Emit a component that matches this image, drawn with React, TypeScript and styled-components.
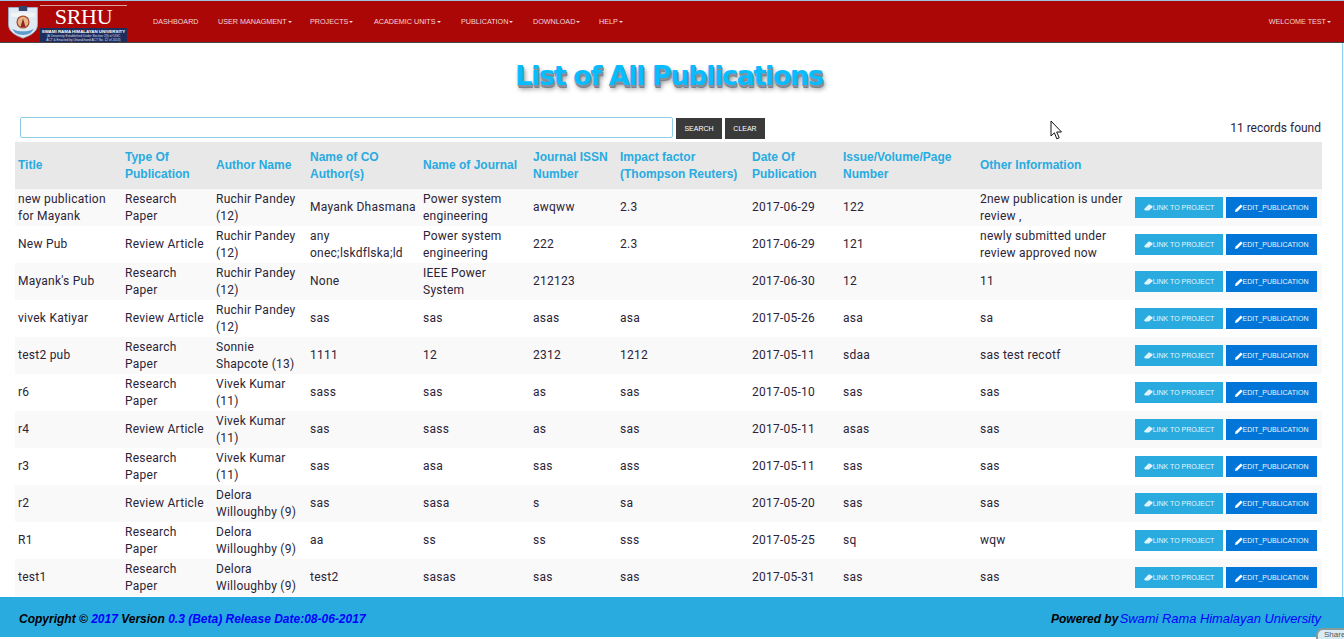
import { createGlobalStyle, styled } from 'styled-components'

const rows = [
  ['new publication for Mayank', 'Research Paper', 'Ruchir Pandey (12)', 'Mayank Dhasmana', 'Power system engineering', 'awqww', '2.3', '2017-06-29', '122', '2new publication is under review ,'],
  ['New Pub', 'Review Article', 'Ruchir Pandey (12)', 'any onec;lskdflska;ld', 'Power system engineering', '222', '2.3', '2017-06-29', '121', 'newly submitted under review approved now'],
  ["Mayank's Pub", 'Research Paper', 'Ruchir Pandey (12)', 'None', 'IEEE Power System', '212123', '', '2017-06-30', '12', '11'],
  ['vivek Katiyar', 'Review Article', 'Ruchir Pandey (12)', 'sas', 'sas', 'asas', 'asa', '2017-05-26', 'asa', 'sa'],
  ['test2 pub', 'Research Paper', 'Sonnie Shapcote (13)', '1111', '12', '2312', '1212', '2017-05-11', 'sdaa', 'sas test recotf'],
  ['r6', 'Research Paper', 'Vivek Kumar (11)', 'sass', 'sas', 'as', 'sas', '2017-05-10', 'sas', 'sas'],
  ['r4', 'Review Article', 'Vivek Kumar (11)', 'sas', 'sass', 'as', 'sas', '2017-05-11', 'asas', 'sas'],
  ['r3', 'Research Paper', 'Vivek Kumar (11)', 'sas', 'asa', 'sas', 'ass', '2017-05-11', 'sas', 'sas'],
  ['r2', 'Review Article', 'Delora Willoughby (9)', 'sas', 'sasa', 's', 'sa', '2017-05-20', 'sas', 'sas'],
  ['R1', 'Research Paper', 'Delora Willoughby (9)', 'aa', 'ss', 'ss', 'sss', '2017-05-25', 'sq', 'wqw'],
  ['test1', 'Research Paper', 'Delora Willoughby (9)', 'test2', 'sasas', 'sas', 'sas', '2017-05-31', 'sas', 'sas'],
]

const headers = [
  'Title',
  'Type Of Publication',
  'Author Name',
  'Name of CO Author(s)',
  'Name of Journal',
  'Journal ISSN Number',
  'Impact factor (Thompson Reuters)',
  'Date Of Publication',
  'Issue/Volume/Page Number',
  'Other Information',
  '',
]

const columnWidths = [107, 91, 94, 113, 110, 87, 132, 91, 137, 155, 190]

const navItems = [
  { label: 'DASHBOARD', width: 65 },
  { label: 'USER MANAGMENT', caret: true, width: 92 },
  { label: 'PROJECTS', caret: true, width: 64 },
  { label: 'ACADEMIC UNITS', caret: true, width: 87 },
  { label: 'PUBLICATION', caret: true, width: 72 },
  { label: 'DOWNLOAD', caret: true, width: 66 },
  { label: 'HELP', caret: true, width: 40 },
]

const App = () => {
  return (
    <>
      <GlobalStyle />
      <Page>
        <NavBar>
          <Logo>
            <Crest viewBox="0 0 40 40">
              <path d="M3 3h34v20c0 9-9 13-17 16C12 36 3 32 3 23z" fill="#dfeaf4" stroke="#9db6cf" strokeWidth="1" />
              <rect x="15" y="1" width="10" height="6" fill="#2f4468" />
              <path d="M6 9h28v5H6z" fill="#f3f4f4" />
              <circle cx="20" cy="20" r="7" fill="#e9b48a" stroke="#a8502f" strokeWidth="1.5" />
              <path d="M17 26l3-10 3 10z" fill="#8c2a20" />
              <path d="M7 28c6 4 20 4 26 0l-4 5c-5 3-13 3-18 0z" fill="#5f9ccb" />
            </Crest>
            <Brand>
              <BrandRule />
              <BrandName>SRHU</BrandName>
              <BrandPlate>
                <PlateTitle>SWAMI RAMA HIMALAYAN UNIVERSITY</PlateTitle>
                <PlateLine>(A University Established Under Section 2(f) of UGC</PlateLine>
                <PlateLine>ACT &amp; Enacted by Uttarakhand ACT No. 12 of 2013)</PlateLine>
              </BrandPlate>
            </Brand>
          </Logo>
          <NavList>
            {navItems.map((item) => (
              <NavItem key={item.label} $width={item.width}>
                {item.label}
                {item.caret && <Caret />}
              </NavItem>
            ))}
          </NavList>
          <Welcome>
            WELCOME TEST
            <Caret />
          </Welcome>
        </NavBar>

        <Main>
          <Heading>List of All Publications</Heading>

          <SearchRow>
            <SearchInput />
            <DarkButton $width={46}>SEARCH</DarkButton>
            <DarkButton $width={40}>CLEAR</DarkButton>
            <Records>11 records found</Records>
          </SearchRow>

          <Table>
            <colgroup>
              {columnWidths.map((w, i) => (
                <col key={i} width={w} />
              ))}
            </colgroup>
            <thead>
              <tr>
                {headers.map((h, i) => (
                  <Th key={i}>{h}</Th>
                ))}
              </tr>
            </thead>
            <tbody>
              {rows.map((row, i) => (
                <Tr key={i}>
                  {row.map((cell, j) => (
                    <Td key={j}>{cell}</Td>
                  ))}
                  <ActionCell>
                    <Actions>
                      <ActionButton $color="#29abe0" $width={88}>
                        <svg width="9" height="7" viewBox="0 0 9 7">
                          <path d="M0 5.2 4.6.6c.3-.3.7-.3 1 0l2.9 1.7c.3.3.3.6 0 .9L5 6.5H1.2z" fill="#dff3fb" />
                        </svg>
                        LINK TO PROJECT
                      </ActionButton>
                      <ActionButton $color="#0275d8" $width={91}>
                        <svg width="8" height="8" viewBox="0 0 8 8">
                          <path d="M0 8l.6-2.4L5.8.4l1.8 1.8L2.4 7.4z" fill="#fff" />
                        </svg>
                        EDIT_PUBLICATION
                      </ActionButton>
                    </Actions>
                  </ActionCell>
                </Tr>
              ))}
            </tbody>
          </Table>
        </Main>

        <Footer>
          <FooterText>
            Copyright © <FooterLink>2017</FooterLink> Version <FooterLink>0.3 (Beta) Release Date:08-06-2017</FooterLink>
          </FooterText>
          <FooterText>
            Powered by <UniversityLink>Swami Rama Himalayan University</UniversityLink>
          </FooterText>
        </Footer>

        <Cursor width="13" height="20" viewBox="0 0 13 20">
          <path d="M1 1v15l3.4-3.2 2.4 6 2.4-1-2.5-5.8H11.5z" fill="#fff" stroke="#111" strokeWidth="1" />
        </Cursor>
        <ShareTab>Share</ShareTab>
      </Page>
    </>
  )
}

export default App

const GlobalStyle = createGlobalStyle`
  html, body {
    margin: 0;
    padding: 0;
    background: #fff;
    overflow: hidden;
  }
  body {
    font-family: "Liberation Sans", Arial, sans-serif;
    font-size: 12px;
    color: #2b2438;
  }
`

const Page = styled.div`
  position: relative;
  width: 1344px;
  height: 639px;
  box-sizing: border-box;
  border-top: 1px solid #9cc4e0;
  overflow: hidden;
`

const NavBar = styled.div`
  display: flex;
  align-items: center;
  height: 42px;
  box-sizing: border-box;
  background: #ab0707;
  border-bottom: 1px solid #444;
`

const Logo = styled.div`
  display: flex;
  align-items: center;
  width: 143px;
  padding-left: 6px;
  box-sizing: border-box;
`

const Crest = styled.svg`
  width: 34px;
  height: 38px;
  flex: none;
`

const Brand = styled.div`
  display: flex;
  flex-direction: column;
  width: 87px;
  height: 40px;
`

const BrandRule = styled.div`
  height: 1px;
  margin-top: 3px;
  background: #d8a0a0;
`

const BrandName = styled.div`
  height: 22px;
  font-family: "Liberation Serif", serif;
  font-size: 22px;
  line-height: 22px;
  letter-spacing: -0.3px;
  color: #fff;
  text-align: center;
`

const BrandPlate = styled.div`
  flex: 1;
  padding-top: 1px;
  background: #1e2d5c;
  text-align: center;
  overflow: hidden;
`

const PlateTitle = styled.div`
  font-size: 4.4px;
  line-height: 5px;
  font-weight: bold;
  color: #fff;
  white-space: nowrap;
`

const PlateLine = styled.div`
  font-size: 3.2px;
  line-height: 4px;
  color: #dde;
  white-space: nowrap;
`

const NavList = styled.div`
  display: flex;
  align-items: center;
  margin-left: 10px;
`

const NavItem = styled.div<{ $width: number }>`
  width: ${(p) => p.$width}px;
  font-size: 7.2px;
  color: #f2d6dc;
  white-space: nowrap;
`

const Welcome = styled.div`
  margin-left: auto;
  margin-right: 13px;
  font-size: 7.2px;
  color: #f2d6dc;
  white-space: nowrap;
`

const Caret = styled.span`
  display: inline-block;
  margin-left: 1px;
  vertical-align: middle;
  border-top: 2px solid #f2d6dc;
  border-left: 2px solid transparent;
  border-right: 2px solid transparent;
`

const Main = styled.div`
  width: 1343px;
  height: 554px;
  box-sizing: border-box;
  border-right: 1px solid #8fd0f2;
`

const Heading = styled.h1`
  margin: 0;
  padding: 14px 4px 0 0;
  height: 72px;
  box-sizing: border-box;
  font-family: "DejaVu Sans", Verdana, sans-serif;
  font-size: 27px;
  line-height: 38px;
  font-weight: bold;
  letter-spacing: -1.38px;
  text-align: center;
  color: #08bcff;
  text-shadow: 0 1px 0 #8a8f99, 1px 2px 0 #8a8f99, 1px 3px 0 #7c818b, 2px 4px 5px rgba(0, 0, 0, 0.45);
`

const SearchRow = styled.div`
  display: flex;
  align-items: center;
  gap: 3px;
  height: 24px;
  padding: 0 21px 0 20px;
`

const SearchInput = styled.input`
  width: 653px;
  height: 21px;
  box-sizing: border-box;
  border: 1px solid #8ccde8;
  border-radius: 2px;
  background: #fff;
  outline: none;
`

const DarkButton = styled.div<{ $width: number }>`
  display: flex;
  align-items: center;
  justify-content: center;
  width: ${(p) => p.$width}px;
  height: 21px;
  margin-top: 3px;
  background: #3a3a3a;
  color: #fff;
  font-size: 7px;
`

const Records = styled.div`
  margin-left: auto;
  margin-top: 2px;
  font-family: Roboto, "Liberation Sans", sans-serif;
  font-size: 12px;
  color: #2b2438;
`

const Table = styled.table`
  width: 1307px;
  margin: 3px 0 0 15px;
  border-collapse: collapse;
  table-layout: fixed;
`

const Th = styled.th`
  height: 47px;
  padding: 0 3px;
  box-sizing: border-box;
  background: #e8e8e8;
  color: #29abe0;
  font-size: 12px;
  line-height: 17px;
  font-weight: bold;
  text-align: left;
  vertical-align: middle;
`

const Tr = styled.tr`
  height: 37px;
  &:nth-child(odd) {
    background: #f9f9f9;
  }
  &:nth-child(even) {
    background: #fff;
  }
`

const Td = styled.td`
  padding: 0 3px;
  font-family: Roboto, "Liberation Sans", sans-serif;
  font-size: 12px;
  line-height: 17px;
  vertical-align: middle;
  letter-spacing: 0.25px;
`

const ActionCell = styled.td`
  padding: 0;
  vertical-align: middle;
`

const Actions = styled.div`
  display: flex;
  gap: 3px;
  padding-left: 3px;
`

const ActionButton = styled.div<{ $color: string; $width: number }>`
  display: flex;
  align-items: center;
  justify-content: center;
  width: ${(p) => p.$width}px;
  height: 21px;
  background: ${(p) => p.$color};
  color: #e8f5fb;
  font-size: 7px;
  white-space: nowrap;
`

const Footer = styled.div`
  display: flex;
  align-items: center;
  justify-content: space-between;
  height: 40px;
  padding: 3px 23px 0 19px;
  box-sizing: border-box;
  background: #29abe0;
`

const FooterText = styled.div`
  font-size: 12px;
  font-weight: bold;
  font-style: italic;
  color: #000;
`

const FooterLink = styled.span`
  color: #0000ff;
`

const UniversityLink = styled.span`
  margin-left: -2px;
  color: #0000ff;
  font-weight: normal;
  font-size: 12.9px;
`

const Cursor = styled.svg`
  position: absolute;
  left: 1050px;
  top: 119px;
`

const ShareTab = styled.div`
  position: absolute;
  right: -4px;
  bottom: -3px;
  width: 32px;
  height: 14px;
  padding-left: 6px;
  box-sizing: border-box;
  border: 2px solid #8a9a9a;
  border-radius: 7px 0 0 0;
  background: #d9ecf4;
  color: #555;
  font-size: 8px;
  line-height: 9px;
`
